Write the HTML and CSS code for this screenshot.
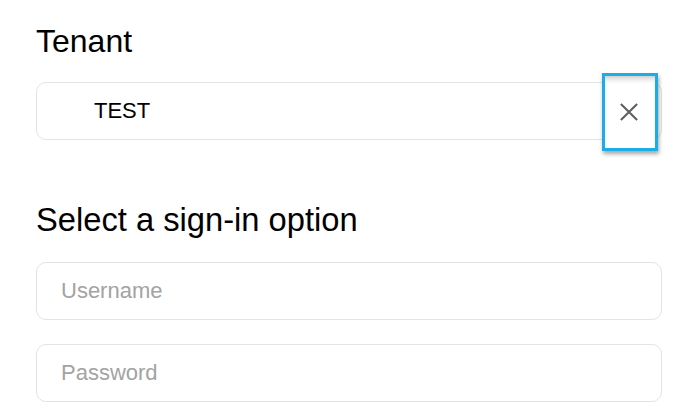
FILE: index.html
```html
<!DOCTYPE html>
<html lang="en">
<head>
  <meta charset="UTF-8">
  <meta name="viewport" content="width=device-width, initial-scale=1.0">
  <title>Sign in</title>
  <link rel="stylesheet" href="styles.css">
</head>
<body>
  <div class="signin">
    <div class="group">
      <h2 class="title">Tenant</h2>
      <div class="tenant-field">
        <input type="text" class="field tenant-input" value="TEST">
        <button class="clear-btn" aria-label="Clear tenant">
          <svg width="20" height="20" viewBox="0 0 20 20">
            <path d="M1 1 L19 19 M19 1 L1 19" stroke="#5f5f5f" stroke-width="2.3" fill="none"/>
          </svg>
        </button>
      </div>
    </div>

    <div class="group group-login">
      <h2 class="title title-wide">Select a sign-in option</h2>
      <input type="text" class="field" placeholder="Username">
      <input type="password" class="field" placeholder="Password">
    </div>
  </div>
</body>
</html>
```

FILE: styles.css
```css
* {
  margin: 0;
  padding: 0;
  box-sizing: border-box;
  font-family: 'Liberation Sans', Arial, sans-serif;
}
body {
  background: #fff;
  color: #000;
  padding: 23px 26px 0 36px;
}
.signin {
  display: flex;
  flex-direction: column;
  gap: 62px;
}
.group {
  display: flex;
  flex-direction: column;
  gap: 23px;
}
.group-login {
  gap: 24px;
}
.title {
  font-size: 32px;
  font-weight: normal;
  line-height: 36px;
}
.title-wide {
  font-size: 32.7px;
}
.field {
  width: 100%;
  height: 58px;
  border: 1px solid #e3e3e3;
  border-radius: 10px;
  padding: 0 24px;
  font-size: 22px;
  color: #000;
  background: #fff;
  outline: none;
}
.field::placeholder {
  color: #a3a3a3;
}
.tenant-field {
  position: relative;
}
.tenant-input {
  padding-left: 57px;
}
.clear-btn {
  position: absolute;
  right: 4px;
  top: -9px;
  width: 56px;
  height: 78px;
  border: 3px solid #1aaee5;
  background: #fff;
  display: flex;
  align-items: center;
  justify-content: center;
  cursor: pointer;
  box-shadow: 1px 3px 4px rgba(0,0,0,0.35), inset 0 7px 6px -5px rgba(0,0,0,0.25);
}
.clear-btn svg {
  width: 18px;
  height: 18px;
  margin-left: -3px;
}
```
